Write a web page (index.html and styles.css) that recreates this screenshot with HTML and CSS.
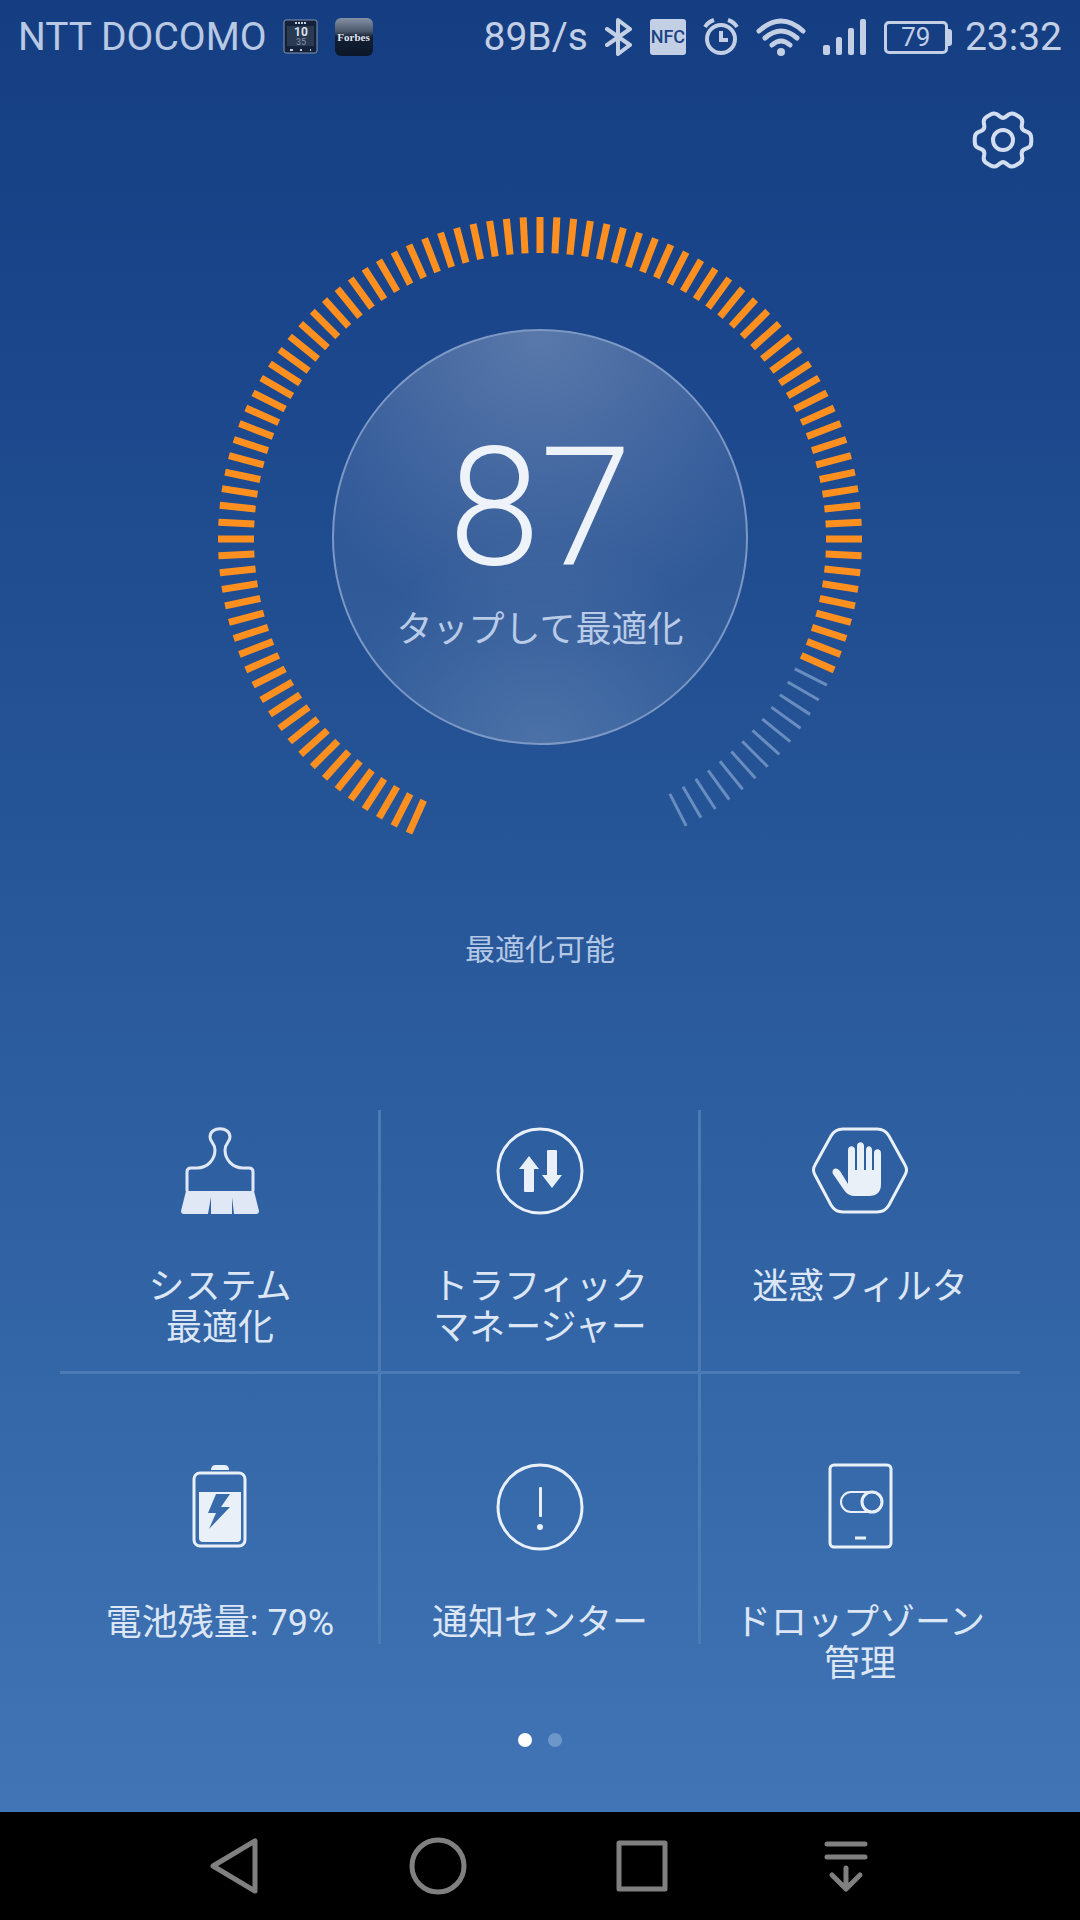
FILE: index.html
```html
<!DOCTYPE html>
<html lang="ja">
<head>
  <meta charset="UTF-8">
  <title>端末管理</title>
  <meta name="viewport" content="width=device-width, initial-scale=1.0">
  <link rel="stylesheet" href="styles.css">
</head>
<body>

  <header class="status-bar">
    <span class="carrier">NTT DOCOMO</span>
    <svg class="app-clock" width="36" height="36" viewBox="0 0 36 36">
      <rect x="1" y="1" width="33" height="33" rx="2" fill="#13213a" stroke="#8595ae"/>
      <rect x="4" y="7" width="27" height="20" fill="#2a3a52"/>
      <path d="M12 4h11" stroke="#c5cedd" stroke-width="2" stroke-dasharray="2 1"/>
      <text x="18" y="17" class="clock-hour">10</text>
      <text x="18" y="26" class="clock-minute">35</text>
      <path d="M7 31h3M17 31h2M27 31h1" stroke="#c5cedd" stroke-width="2"/>
    </svg>
    <span class="app-forbes">Forbes</span>
    <div class="status-icons">
      <span class="speed">89B/s</span>
      <svg width="28" height="38" viewBox="0 0 28 38" fill="none" stroke="#c3cfe5" stroke-width="4" stroke-linejoin="round" stroke-linecap="round">
        <path d="M2 11l23 16-12 9V2l12 9L2 27"/>
      </svg>
      <span class="nfc">NFC</span>
      <svg width="36" height="38" viewBox="0 0 36 38" fill="none" stroke="#c3cfe5" stroke-width="4">
        <circle cx="18" cy="21" r="14"/>
        <path d="M18 13v9h7"/>
        <path d="M2 9q3-5 9-7M34 9q-3-5-9-7"/>
      </svg>
      <svg width="50" height="38" viewBox="0 0 50 38" fill="none" stroke="#c3cfe5" stroke-width="5" stroke-linecap="round">
        <path d="M3 13q22-20 44 0M9 20q16-14 32 0M16 27q9-8 18 0"/>
        <circle cx="25" cy="34" r="4" fill="#c3cfe5" stroke="none"/>
      </svg>
      <svg width="44" height="36" viewBox="0 0 44 36" fill="#c3cfe5">
        <rect x="0" y="26" width="7" height="10" rx="2"/>
        <rect x="13" y="18" width="6" height="18" rx="2"/>
        <rect x="25" y="9" width="6" height="27" rx="2"/>
        <rect x="37" y="0" width="6" height="36" rx="2"/>
      </svg>
      <span class="charge">79</span>
      <span class="time">23:32</span>
    </div>
  </header>

  <main>
    <div class="toolbar">
      <button class="settings" aria-label="設定">
        <svg width="64" height="64" viewBox="-32 -32 64 64" fill="none" stroke="#d3dff1" stroke-width="4" stroke-linejoin="round">
          <path id="gear"/>
          <circle r="10"/>
        </svg>
      </button>
    </div>

    <div class="gauge">
      <svg class="ticks" viewBox="-322 -322 644 644" id="ticks"></svg>
      <button class="score">
        <span class="number">87</span>
        <span class="hint">タップして最適化</span>
      </button>
    </div>
    <p class="state">最適化可能</p>

    <nav class="menu">
      <button class="item">
        <svg width="96" height="88" viewBox="0 0 96 88" fill="none" stroke="#dfe8f4" stroke-width="3">
          <path d="M15 64V45q0-4 4-4h6c11 0 18-9 18-18 0-7-5-8-5-13 0-11 20-11 20 0 0 5-5 6-5 13 0 9 7 18 18 18h6q4 0 4 4v19"/>
          <path d="M14 64h68l5 20q0 3-3 3H62l-2-17v17H39V70l-3 17H12q-3 0-3-3z" fill="#dfe8f4" stroke="none"/>
        </svg>
        <span class="label">システム<br>最適化</span>
      </button>
      <button class="item">
        <svg width="96" height="88" viewBox="0 0 96 88" fill="#eaf0f8">
          <circle cx="48" cy="44" r="42" fill="none" stroke="#eaf0f8" stroke-width="3"/>
          <path d="M37 29l10 13h-5v22q0 1-1 1h-8q-1 0-1-1V42h-5z"/>
          <path d="M60 61L50 48h5V24q0-1 1-1h8q1 0 1 1v24h5z"/>
        </svg>
        <span class="label">トラフィック<br>マネージャー</span>
      </button>
      <button class="item">
        <svg width="96" height="88" viewBox="0 0 96 88" fill="none" stroke="#eaf0f8" stroke-width="3">
          <path d="M31 2h34q8 0 12 7l16 29q3 5 0 10L77 78q-4 7-12 7H31q-8 0-12-7L3 48q-3-5 0-10L19 9q4-7 12-7z"/>
          <path d="M36 57V23c0-5 7-5 7 0v20h2V19c0-5 7-5 7 0v24h2V23c0-5 6-5 6 0v20h2V26c0-5 7-5 7 0v31q0 12-12 12H43q-7 0-11-6L21 47c-2-5 3-8 7-3z" fill="#eaf0f8" stroke="none"/>
        </svg>
        <span class="label">迷惑フィルタ</span>
      </button>
      <button class="item">
        <svg width="96" height="88" viewBox="0 0 96 88" fill="#eaf0f8">
          <rect x="22" y="10" width="51" height="73" rx="6" fill="none" stroke="#eaf0f8" stroke-width="3"/>
          <path d="M39 7q0-5 5-5h8q5 0 5 5z"/>
          <path fill-rule="evenodd" d="M27 29h42v46q0 4-4 4H31q-4 0-4-4zM44 31l-8 19h8l-7 16 21-22h-9l9-13z"/>
        </svg>
        <span class="label">電池残量: 79%</span>
      </button>
      <button class="item">
        <svg width="96" height="88" viewBox="0 0 96 88" fill="#eaf0f8">
          <circle cx="48" cy="44" r="42" fill="none" stroke="#eaf0f8" stroke-width="3"/>
          <rect x="47" y="24" width="3" height="30" rx="1"/>
          <circle cx="48" cy="64" r="3"/>
        </svg>
        <span class="label">通知センター</span>
      </button>
      <button class="item">
        <svg width="96" height="88" viewBox="0 0 96 88" fill="none" stroke="#eaf0f8" stroke-width="3">
          <rect x="18" y="2" width="61" height="82" rx="4"/>
          <rect x="29" y="29" width="41" height="20" rx="10" stroke-width="2"/>
          <circle cx="60" cy="39" r="10"/>
          <path d="M43 75h11"/>
        </svg>
        <span class="label">ドロップゾーン<br>管理</span>
      </button>
    </nav>

    <div class="pager">
      <span class="dot active"></span>
      <span class="dot"></span>
    </div>
  </main>

  <footer class="nav-bar">
    <button aria-label="戻る">
      <svg width="60" height="60" viewBox="0 0 60 60"><path d="M51 5v50L9 30z"/></svg>
    </button>
    <button aria-label="ホーム">
      <svg width="60" height="60" viewBox="0 0 60 60"><circle cx="30" cy="30" r="26"/></svg>
    </button>
    <button aria-label="履歴">
      <svg width="60" height="60" viewBox="0 0 60 60"><rect x="7" y="7" width="46" height="46"/></svg>
    </button>
    <button aria-label="通知パネル">
      <svg width="60" height="60" viewBox="0 0 60 60"><path d="M11 8h38M11 21h38M30 32v20M16 39l14 14 14-14"/></svg>
    </button>
  </footer>

  <script src="script.js"></script>
</body>
</html>
```
FILE: styles.css
```css
* {
  box-sizing: border-box;
}

body {
  margin: 0;
  min-height: 100vh;
  display: flex;
  flex-direction: column;
  background: linear-gradient(#153e82, #1c478c 20%, #285899 48%, #3568a9 74%, #4175b6 95%);
  color: #dce6f5;
  font-family: Roboto, "Noto Sans CJK JP", sans-serif;
}

button {
  border: 0;
  padding: 0;
  background: none;
  color: inherit;
  font: inherit;
}

svg {
  display: block;
  flex-shrink: 0;
}

.status-bar {
  height: 72px;
  padding: 2px 18px 0;
  display: flex;
  align-items: center;
  color: #b9c9e4;
  font-size: 39px;
}

.app-clock {
  margin-left: 16px;
}

.clock-hour,
.clock-minute {
  fill: #dbe2ec;
  font-size: 12px;
  font-weight: bold;
  text-anchor: middle;
}

.clock-minute {
  fill: #8492a8;
  font-size: 9px;
  font-weight: normal;
}

.app-forbes {
  width: 38px;
  height: 38px;
  margin-left: 16px;
  border-radius: 6px;
  background: linear-gradient(#8592a5, #4b586b 35%, #131f33 50%, #0c1729);
  color: #e3e7ee;
  font: bold 11px/38px "Liberation Serif", serif;
  text-align: center;
}

.status-icons {
  margin-left: auto;
  display: flex;
  align-items: center;
  gap: 17px;
  color: #c3cfe5;
}

.nfc {
  width: 36px;
  height: 36px;
  border-radius: 3px;
  background: #c3cfe5;
  color: #1c4485;
  font: 500 18px/36px Roboto, sans-serif;
  text-align: center;
}

.charge {
  position: relative;
  width: 64px;
  height: 33px;
  border: 3px solid #c3cfe5;
  border-radius: 5px;
  font-size: 26px;
  line-height: 27px;
  text-align: center;
}

.charge::after {
  content: "";
  position: absolute;
  top: 5px;
  right: -7px;
  width: 4px;
  height: 17px;
  border-radius: 0 3px 3px 0;
  background: #c3cfe5;
}

main {
  flex: 1;
  display: flex;
  flex-direction: column;
  align-items: center;
}

.toolbar {
  width: 100%;
  padding: 36px 45px 0;
  display: flex;
  justify-content: flex-end;
}

.gauge {
  width: 644px;
  height: 644px;
  margin-top: 45px;
  display: grid;
  place-items: center;
}

.gauge > * {
  grid-area: 1 / 1;
}

.ticks {
  width: 100%;
}

.tick {
  stroke: #ff8f1f;
  stroke-width: 7;
}

.tick.off {
  stroke: #6a8dc0;
  stroke-width: 3;
}

.score {
  width: 416px;
  height: 416px;
  margin-bottom: 4px;
  border: 2px solid #7c98c5;
  border-radius: 50%;
  background:
    radial-gradient(circle at 50% 0, rgba(255, 255, 255, 0.22), transparent 65%),
    radial-gradient(circle at 50% 100%, rgba(255, 255, 255, 0.12), transparent 45%),
    rgba(255, 255, 255, 0.07);
  display: flex;
  flex-direction: column;
  align-items: center;
}

.number {
  margin-top: 82px;
  color: #eef2f9;
  font-size: 165px;
  font-weight: 300;
  line-height: 190px;
}

.hint {
  color: #b9cbe7;
  font-size: 36px;
  line-height: 54px;
}

.state {
  margin: 67px 0 0;
  color: #b4c8e6;
  font-size: 30px;
  line-height: 44px;
}

.menu {
  width: calc(100% - 120px);
  margin-top: 138px;
  display: grid;
  grid-template-columns: repeat(3, 1fr);
}

.item {
  position: relative;
  height: 264px;
  padding-top: 17px;
  display: flex;
  flex-direction: column;
  align-items: center;
}

/* 縦の区切り線 */
.item:not(:nth-child(3n))::after {
  content: "";
  position: absolute;
  top: 0;
  bottom: 0;
  right: -1px;
  width: 3px;
  background: #4b7ab5;
}

.item:nth-child(-n+3) {
  border-bottom: 3px solid #4b7ab5;
}

.item:nth-child(n+4) {
  height: 270px;
  padding-top: 89px;
}

.label {
  margin-top: 52px;
  font-size: 36px;
  line-height: 41px;
}

.pager {
  margin-top: 89px;
  display: flex;
  gap: 16px;
}

.dot {
  width: 14px;
  height: 14px;
  border-radius: 50%;
  background: #6d96cb;
}

.dot.active {
  background: #fff;
}

.nav-bar {
  height: 108px;
  background: #000;
  display: flex;
  justify-content: center;
  align-items: center;
}

.nav-bar button {
  width: 204px;
  display: flex;
  justify-content: center;
}

.nav-bar svg {
  fill: none;
  stroke: #808080;
  stroke-width: 5;
  stroke-linecap: round;
  stroke-linejoin: round;
}
```
FILE: script.js
```js
const SVG_NS = 'http://www.w3.org/2000/svg';

// 目盛りは3度きざみ
function drawTicks(score) {
  const svg = document.getElementById('ticks');
  const total = 104;
  const on = Math.ceil(total * score / 100);
  for (let i = 0; i < total; i++) {
    const line = document.createElementNS(SVG_NS, 'line');
    line.setAttribute('class', i < on ? 'tick' : 'tick off');
    line.setAttribute('y1', -322);
    line.setAttribute('y2', -286);
    line.setAttribute('transform', `rotate(${-156 + i * 3})`);
    svg.appendChild(line);
  }
}

// 歯車の輪郭（歯6枚、角は丸める）
function drawGear() {
  const points = [];
  for (let a = 0; a < 360; a += 60) {
    for (const [offset, r] of [[-30, 21], [-13, 29], [13, 29]]) {
      const t = (a + offset) * Math.PI / 180;
      points.push([r * Math.cos(t), r * Math.sin(t)]);
    }
  }
  const between = (p, q, k) => `${p[0] + (q[0] - p[0]) * k} ${p[1] + (q[1] - p[1]) * k}`;
  let d = '';
  points.forEach((p, i) => {
    const prev = points[(i + points.length - 1) % points.length];
    const next = points[(i + 1) % points.length];
    d += `${i ? 'L' : 'M'}${between(p, prev, 0.35)}Q${p[0]} ${p[1]} ${between(p, next, 0.35)}`;
  });
  document.getElementById('gear').setAttribute('d', d + 'Z');
}

drawTicks(87);
drawGear();
```
